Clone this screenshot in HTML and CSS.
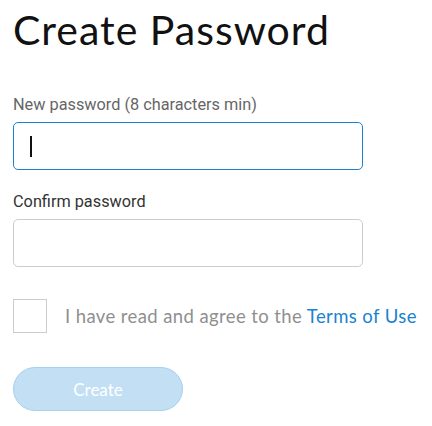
FILE: index.html
```html
<!DOCTYPE html>
<html>
<head>
<meta charset="utf-8">
<link rel="stylesheet" href="styles.css">
</head>
<body>
<main class="page">
  <h1 class="title">Create Password</h1>
  <form class="form">
    <div class="field">
      <label class="label label-muted">New password (8 characters min)</label>
      <div class="input input-focus"><span class="caret"></span></div>
    </div>
    <div class="field">
      <label class="label">Confirm password</label>
      <div class="input"></div>
    </div>
    <div class="agree">
      <span class="checkbox"></span>
      <span class="agree-text">I have read and agree to the <a class="link">Terms of Use</a></span>
    </div>
    <button type="button" class="btn">Create</button>
  </form>
</main>
</body>
</html>
```
FILE: styles.css
```css
* { box-sizing: border-box; }
html, body { margin: 0; background: #fff; }
.page {
  padding: 8px 0 0 13px;
  font-family: Roboto, "Liberation Sans", sans-serif;
}
.title {
  margin: 0;
  font-family: Lato, "Open Sans", sans-serif;
  font-weight: 400;
  font-size: 41px;
  line-height: 44px;
  color: #111;
  letter-spacing: 1px;
}
.form {
  display: flex;
  flex-direction: column;
  margin-top: 43px;
}
.field {
  display: flex;
  flex-direction: column;
  gap: 8px;
  margin-bottom: 22px;
}
.label {
  font-size: 16.3px;
  line-height: 19px;
  color: #333;
}
.label-muted { color: #666; }
.input {
  width: 350px;
  height: 48px;
  border: 1px solid #c9ccd1;
  border-radius: 5px;
  display: flex;
  align-items: center;
  padding-left: 16px;
}
.input-focus { border-color: #1a82d0; }
.caret {
  width: 1.5px;
  height: 21px;
  background: #111;
}
.agree {
  display: flex;
  align-items: center;
  gap: 18px;
  margin-top: 10px;
}
.checkbox {
  width: 34px;
  height: 34px;
  border: 1px solid #ccc;
  flex: none;
}
.agree-text {
  font-family: Lato, "Open Sans", sans-serif;
  font-size: 18.5px;
  letter-spacing: 0.4px;
  color: #8f8f8f;
}
.link { color: #1a82d0; }
.btn {
  margin-top: 34px;
  width: 170px;
  height: 44px;
  border-radius: 22px;
  border: 1px solid #a8d0ef;
  background: #c2dff4;
  color: #fff;
  font-family: Lato, "Open Sans", sans-serif;
  font-size: 17px;
  padding: 0;
}
```
